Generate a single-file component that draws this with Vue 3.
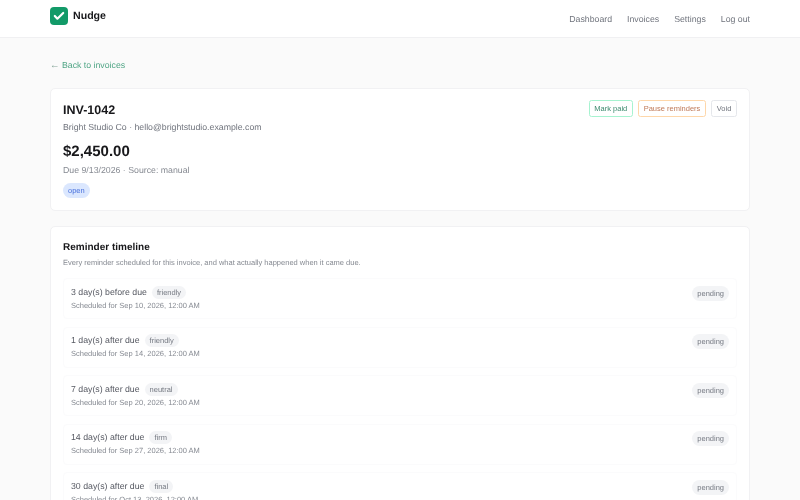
<script setup>
const navLinks = ['Dashboard', 'Invoices', 'Settings', 'Log out']
const reminders = [
  { label: '3 day(s) before due', tone: 'friendly', date: 'Sep 10, 2026' },
  { label: '1 day(s) after due', tone: 'friendly', date: 'Sep 14, 2026' },
  { label: '7 day(s) after due', tone: 'neutral', date: 'Sep 20, 2026' },
  { label: '14 day(s) after due', tone: 'firm', date: 'Sep 27, 2026' },
  { label: '30 day(s) after due', tone: 'final', date: 'Oct 13, 2026' },
]
</script>

<template>
  <div class="page">
    <header class="topbar">
      <div class="brand">
        <svg class="logo" width="18" height="18" viewBox="0 0 18 18">
          <rect width="18" height="18" rx="4" fill="#129a68" />
          <path d="M4.8 9l2.6 2.7L13.2 6" fill="none" stroke="#fff" stroke-width="2.2" stroke-linecap="round" stroke-linejoin="round" />
        </svg>
        <span class="brand-name">Nudge</span>
      </div>
      <nav class="nav">
        <a v-for="l in navLinks" :key="l">{{ l }}</a>
      </nav>
    </header>

    <main class="main">
      <a class="back"><span class="arrow">←</span> Back to invoices</a>

      <section class="card invoice">
        <div class="invoice-info">
          <h1>INV-1042</h1>
          <p class="client">Bright Studio Co · hello@brightstudio.example.com</p>
          <p class="amount">$2,450.00</p>
          <p class="due">Due 9/13/2026 · Source: manual</p>
          <span class="pill open">open</span>
        </div>
        <div class="actions">
          <button class="btn green">Mark paid</button>
          <button class="btn orange">Pause reminders</button>
          <button class="btn grey">Void</button>
        </div>
      </section>

      <section class="card timeline">
        <h2>Reminder timeline</h2>
        <p class="sub">Every reminder scheduled for this invoice, and what actually happened when it came due.</p>
        <div class="rows">
          <div v-for="r in reminders" :key="r.label" class="row">
            <div>
              <div class="row-title">
                <span>{{ r.label }}</span>
                <span class="pill tone">{{ r.tone }}</span>
              </div>
              <div class="row-date">Scheduled for {{ r.date }}, 12:00 AM</div>
            </div>
            <span class="pill status">pending</span>
          </div>
        </div>
      </section>
    </main>
  </div>
</template>

<style>
html, body { margin: 0; height: 100%; overflow: hidden; background: #fafafa; }
</style>

<style scoped>
.page {
  height: 500px;
  overflow: hidden;
  background: #fafafa;
  font-family: "Liberation Sans", Arial, sans-serif;
  color: #18181b;
  text-rendering: geometricPrecision;
  filter: blur(0.4px);
}
.topbar {
  height: 37px;
  background: #fff;
  border-bottom: 1px solid #f0f0f2;
  padding: 0 50px;
  display: flex;
  align-items: center;
  justify-content: space-between;
}
.brand { display: flex; align-items: center; gap: 5px; margin-top: -4.5px; }
.logo { display: block; }
.brand-name { font-size: 10.625px; font-weight: 700; }
.nav { display: flex; gap: 15px; font-size: 8.75px; color: #70747d; }
.main { padding: 20px 50px 0; }
.back { display: block; font-size: 8.75px; line-height: 14px; color: #4fa585; }
.arrow { color: #8aa89c; font-size: 9.5px; }
.card {
  background: #fff;
  border: 1px solid #f1f1f3;
  border-radius: 5px;
  box-sizing: border-box;
}
.invoice {
  margin-top: 15px;
  padding: 12px 12px 11.5px;
  display: flex;
  justify-content: space-between;
  align-items: flex-start;
}
h1 { margin: 0.5px 0 0; font-size: 12.5px; line-height: 17px; font-weight: 700; }
.client { margin: 2px 0 0; font-size: 8.75px; line-height: 13px; color: #70747d; }
.amount { margin: 8.5px 0 0; font-size: 15px; line-height: 20px; font-weight: 700; }
.due { margin: 1.5px 0 0; font-size: 8.75px; line-height: 13px; color: #868a92; }
.pill {
  display: inline-block;
  border-radius: 999px;
  font-size: 7.5px;
  line-height: 11px;
  padding: 2px 5px;
}
.open { margin-top: 6.5px; background: #dbe7fe; color: #4a72dc; }
.actions { display: flex; gap: 5px; margin-top: -1px; }
.btn {
  font: inherit;
  font-size: 7.5px;
  line-height: 11px;
  height: 17px;
  padding: 0 4.7px;
  background: #fff;
  border-radius: 2.5px;
  border: 1px solid;
}
.green { border-color: #a7f3d0; color: #3c8a6e; }
.orange { border-color: #fed7aa; color: #c07a58; }
.grey { border-color: #e5e7eb; color: #70747d; }
.timeline { margin-top: 15.5px; height: 400px; padding: 14px 12px 13px; }
h2 { margin: 0; font-size: 10px; line-height: 14px; font-weight: 700; }
.sub { margin: 1.5px 0 0; font-size: 7.5px; line-height: 11px; color: #868a92; }
.rows { margin-top: 10.5px; display: flex; flex-direction: column; gap: 7.5px; }
.row {
  height: 41px;
  box-sizing: border-box;
  border: 1px solid #fbfbfc;
  border-radius: 4px;
  padding: 6.5px 7px;
  display: flex;
  justify-content: space-between;
  align-items: flex-start;
}
.row-title { display: flex; align-items: center; gap: 5px; font-size: 8.75px; line-height: 13px; color: #565962; }
.row-date { margin-top: 1px; font-size: 7.5px; line-height: 11px; color: #868a92; }
.tone { background: #f3f4f6; color: #767a83; padding: 1px 5px; }
.status { background: #f3f4f6; color: #767a83; }
</style>
